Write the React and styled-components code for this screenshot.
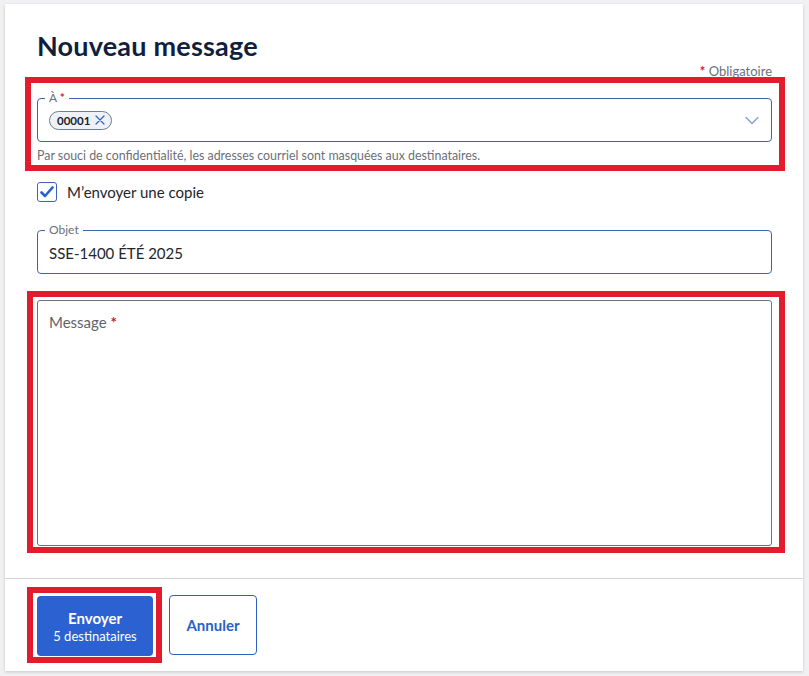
import styled, { createGlobalStyle } from 'styled-components'

const GlobalStyle = createGlobalStyle`
  html, body {
    margin: 0;
    padding: 0;
    background: #f1f1f3;
    font-family: Lato, "Liberation Sans", sans-serif;
  }
`

function Chevron() {
  return (
    <svg width="14" height="9" viewBox="0 0 14 9" fill="none">
      <path d="M1 1.5 L7 7.5 L13 1.5" stroke="#7f9bd1" strokeWidth="1.3" strokeLinecap="round" strokeLinejoin="round" />
    </svg>
  )
}

function Cross() {
  return (
    <svg width="10" height="10" viewBox="0 0 10 10" fill="none">
      <path d="M1 1 L9 9 M9 1 L1 9" stroke="#3a66c4" strokeWidth="1.3" strokeLinecap="round" />
    </svg>
  )
}

function Check() {
  return (
    <svg width="14" height="12" viewBox="0 0 14 12" fill="none">
      <path d="M1.5 6.5 L5 10 L12.5 1.5" stroke="#2a5fd0" strokeWidth="2.6" strokeLinecap="round" strokeLinejoin="round" />
    </svg>
  )
}

function App() {
  return (
    <Page>
      <GlobalStyle />
      <Card>
        <Content>
          <Title>Nouveau message</Title>
          <Required><Star>*</Star> Obligatoire</Required>

          <Highlight $padTop={15} $padBottom={2} $padLeft={6} $padRight={7} $mLeft={12} $mRight={13}>
            <Field $border="#3c64b1" $height={44}>
              <FloatLabel>À <Star>*</Star></FloatLabel>
              <Chip>
                <ChipText>00001</ChipText>
                <Cross />
              </Chip>
              <Spacer />
              <Chevron />
            </Field>
            <Helper>Par souci de confidentialité, les adresses courriel sont masquées aux destinataires.</Helper>
          </Highlight>

          <CheckRow>
            <CheckBox><Check /></CheckBox>
            <CheckLabel>M’envoyer une copie</CheckLabel>
          </CheckRow>

          <Field $border="#3c64b1" $height={44} $top={28}>
            <FloatLabel>Objet</FloatLabel>
            <Value>SSE-1400 ÉTÉ 2025</Value>
          </Field>

          <Highlight $padTop={3} $padBottom={1} $padLeft={4} $padRight={7} $mLeft={10} $mRight={13} $top={17}>
            <MessageBox>
              <Placeholder>Message <Star>*</Star></Placeholder>
            </MessageBox>
          </Highlight>
        </Content>

        <Footer>
          <Highlight $padTop={3} $padBottom={1} $padLeft={4} $padRight={3} $mLeft={0} $mRight={0}>
            <PrimaryButton>
              <strong>Envoyer</strong>
              <Sub>5 destinataires</Sub>
            </PrimaryButton>
          </Highlight>
          <SecondaryButton>Annuler</SecondaryButton>
        </Footer>
      </Card>
    </Page>
  )
}

export default App

/***************************** Styled Components *****************************/

const Page = styled.div`
  width: 809px;
  height: 676px;
  box-sizing: border-box;
  padding: 4px 6px 5px 5px;
`

const Card = styled.div`
  background: #fff;
  height: 100%;
  box-shadow: 0 1px 3px rgba(0, 0, 0, 0.18);
  display: flex;
  flex-direction: column;
`

const Content = styled.div`
  padding: 26px 31px 25px 32px;
  display: flex;
  flex-direction: column;
  border-bottom: 1px solid #d3d3d7;
`

const Title = styled.h1`
  margin: 0;
  font-size: 27px;
  line-height: 32px;
  font-weight: 700;
  color: #0f1f3d;
  letter-spacing: 0.2px;
`

const Required = styled.div`
  align-self: flex-end;
  font-size: 13px;
  line-height: 14px;
  color: #6b6f78;
  margin-top: 2px;
  margin-bottom: -1px;
`

const Star = styled.span`
  color: #d4142a;
  font-weight: 700;
`

const Highlight = styled.div`
  border: 6px solid #e41b2d;
  padding: ${p => p.$padTop}px ${p => p.$padRight}px ${p => p.$padBottom}px ${p => p.$padLeft}px;
  margin: ${p => p.$top || 0}px -${p => p.$mRight}px 0 -${p => p.$mLeft}px;
  display: flex;
  flex-direction: column;
  align-self: ${p => (p.$mLeft === 0 ? 'flex-start' : 'stretch')};
`

const Field = styled.div`
  position: relative;
  height: ${p => p.$height}px;
  box-sizing: border-box;
  margin-top: ${p => p.$top || 0}px;
  border: 1px solid ${p => p.$border};
  border-radius: 4px;
  display: flex;
  align-items: center;
  padding: 0 12px 0 11px;
`

const FloatLabel = styled.span`
  position: absolute;
  top: -8px;
  left: 7px;
  padding: 0 4px;
  background: #fff;
  font-size: 12px;
  line-height: 14px;
  color: #6b6f78;
`

const Chip = styled.div`
  display: flex;
  align-items: center;
  gap: 5px;
  height: 19px;
  box-sizing: border-box;
  padding: 0 6px 0 7px;
  border: 1px solid #6f7d98;
  border-radius: 10px;
  background: #eef1f6;
`

const ChipText = styled.span`
  font-size: 11.5px;
  font-weight: 700;
  color: #1c2230;
`

const Spacer = styled.div`
  flex: 1;
`

const Helper = styled.div`
  margin-top: 6px;
  font-size: 12.4px;
  line-height: 15px;
  color: #6b6f78;
`

const CheckRow = styled.label`
  display: flex;
  align-items: center;
  gap: 10px;
  margin-top: 11px;
`

const CheckBox = styled.span`
  width: 20px;
  height: 20px;
  box-sizing: border-box;
  border: 1.5px solid #3c64b1;
  border-radius: 3px;
  display: flex;
  align-items: center;
  justify-content: center;
`

const CheckLabel = styled.span`
  font-size: 15px;
  color: #22252b;
`

const Value = styled.span`
  font-size: 15px;
  color: #22252b;
  padding-top: 2px;
`

const MessageBox = styled.div`
  height: 246px;
  box-sizing: border-box;
  border: 1px solid #6b7280;
  border-radius: 3px;
  padding: 11px 11px;
`

const Placeholder = styled.span`
  font-size: 15px;
  color: #5f636b;
`

const Footer = styled.div`
  display: flex;
  align-items: center;
  gap: 7px;
  padding: 8px 22px 8px;
`

const PrimaryButton = styled.button`
  width: 116px;
  height: 60px;
  border: none;
  border-radius: 4px;
  background: #2b61d1;
  color: #fff;
  font-family: inherit;
  font-size: 15px;
  display: flex;
  flex-direction: column;
  align-items: center;
  justify-content: center;
  gap: 1px;
`

const Sub = styled.span`
  font-size: 13px;
  font-weight: 400;
`

const SecondaryButton = styled.button`
  width: 88px;
  height: 60px;
  border: 1px solid #2f5fc2;
  border-radius: 4px;
  background: #fff;
  color: #2b5fc9;
  font-family: inherit;
  font-size: 15px;
  font-weight: 700;
`
